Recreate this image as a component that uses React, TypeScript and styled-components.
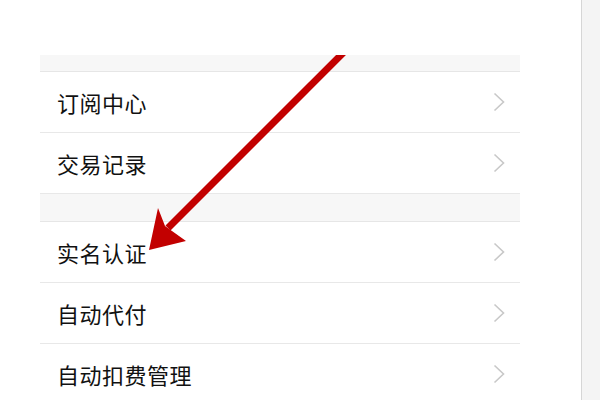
import React from "react"
import styled, { createGlobalStyle } from "styled-components"

const GlobalStyle = createGlobalStyle`
  html, body {
    margin: 0;
    padding: 0;
    background: #ffffff;
  }
  body {
    font-family: "Noto Sans CJK SC", "Noto Sans", sans-serif;
  }
`

const items = [
  { section: true },
  { label: "订阅中心" },
  { label: "交易记录" },
  { section: true, tall: true },
  { label: "实名认证" },
  { label: "自动代付" },
  { label: "自动扣费管理" },
]

export default function App() {
  return (
    <>
      <GlobalStyle />
      <Page>
        <Content>
          <Panel>
            {items.map((item, i) =>
              item.section ? (
                <Section key={i} $tall={item.tall} />
              ) : (
                <Row key={i}>
                  <Label>{item.label}</Label>
                  <Chevron />
                </Row>
              )
            )}
          </Panel>
        </Content>
        <SideStrip />
        <Arrow />
      </Page>
    </>
  )
}

const Chevron = () => (
  <ChevronIcon width="12" height="20" viewBox="0 0 12 20">
    <polyline points="1.5,1.5 10.5,10 1.5,18.5" fill="none" stroke="#c8c8c8" strokeWidth="1.6" />
  </ChevronIcon>
)

const Arrow = () => (
  <ArrowLayer width="600" height="400" viewBox="0 0 600 400">
    <defs>
      <clipPath id="below-top">
        <rect x="0" y="55" width="600" height="345" />
      </clipPath>
    </defs>
    <g clipPath="url(#below-top)" fill="#c20000">
      <line x1="348" y1="48" x2="168" y2="228" stroke="#c20000" strokeWidth="7" />
      <polygon points="149,250 158,208 165,226 186,241" />
    </g>
  </ArrowLayer>
)

const Page = styled.div`
  position: relative;
  display: flex;
  width: 600px;
  height: 400px;
  overflow: hidden;
  background: #ffffff;
`

const Content = styled.div`
  flex: 1;
  padding: 55px 0 0 40px;
`

const Panel = styled.div`
  width: 480px;
  display: flex;
  flex-direction: column;
`

const Section = styled.div<{ $tall?: boolean }>`
  box-sizing: border-box;
  height: ${(p) => (p.$tall ? 28 : 17)}px;
  background: #f7f7f7;
  border-bottom: 1px solid #e6e6e6;
`

const Row = styled.div`
  box-sizing: border-box;
  height: 61px;
  display: flex;
  align-items: center;
  justify-content: space-between;
  padding: 0 15px 0 17px;
  border-bottom: 1px solid #e8e8e8;
`

const Label = styled.span`
  font-size: 22px;
  color: #111111;
  letter-spacing: 0.5px;
`

const ChevronIcon = styled.svg`
  display: block;
`

const SideStrip = styled.div`
  width: 18px;
  background: #f4f4f4;
  border-left: 1px solid #d6d6d6;
`

const ArrowLayer = styled.svg`
  position: absolute;
  left: 0;
  top: 0;
  pointer-events: none;
`
